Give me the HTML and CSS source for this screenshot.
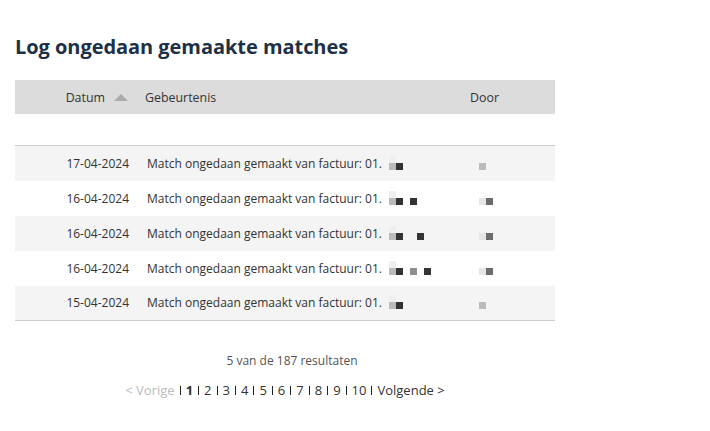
FILE: index.html
```html
<!DOCTYPE html>
<html lang="nl">
<head>
<meta charset="utf-8">
<title>Log ongedaan gemaakte matches</title>
<link rel="stylesheet" href="styles.css">
</head>
<body>
<main class="page">
  <h1 class="title">Log ongedaan gemaakte matches</h1>
  <table class="log">
    <thead>
      <tr class="head-row">
        <th class="c-date">Datum<span class="sort-up"></span></th>
        <th class="c-event">Gebeurtenis</th>
        <th class="c-door">Door</th>
      </tr>
    </thead>
    <tbody>
      <tr class="spacer"><td colspan="3"></td></tr>
      <tr class="row odd">
        <td class="c-date">17-04-2024</td>
        <td class="c-event">Match ongedaan gemaakt van factuur: 01.<span class="px"><i class="l top"></i><i class="d"></i></span></td>
        <td class="c-door"><span class="px door"><i class="l"></i></span></td>
      </tr>
      <tr class="row">
        <td class="c-date">16-04-2024</td>
        <td class="c-event">Match ongedaan gemaakt van factuur: 01.<span class="px"><i class="l top"></i><i class="d"></i><i></i><i class="d"></i></span></td>
        <td class="c-door"><span class="px door"><i class="vl"></i><i class="m"></i></span></td>
      </tr>
      <tr class="row odd">
        <td class="c-date">16-04-2024</td>
        <td class="c-event">Match ongedaan gemaakt van factuur: 01.<span class="px"><i class="l top"></i><i class="d"></i><i></i><i></i><i class="d"></i></span></td>
        <td class="c-door"><span class="px door"><i class="vl"></i><i class="m"></i></span></td>
      </tr>
      <tr class="row">
        <td class="c-date">16-04-2024</td>
        <td class="c-event">Match ongedaan gemaakt van factuur: 01.<span class="px"><i class="l top"></i><i class="d"></i><i></i><i class="g"></i><i></i><i class="d"></i></span></td>
        <td class="c-door"><span class="px door"><i class="vl"></i><i class="m"></i></span></td>
      </tr>
      <tr class="row odd last">
        <td class="c-date">15-04-2024</td>
        <td class="c-event">Match ongedaan gemaakt van factuur: 01.<span class="px"><i class="l top"></i><i class="d"></i></span></td>
        <td class="c-door"><span class="px door"><i class="l"></i></span></td>
      </tr>
    </tbody>
  </table>
  <div class="footer">
    <p class="count">5 van de 187 resultaten</p>
    <nav class="pager">
      <span class="muted">&lt; Vorige</span><span class="sep"></span><b>1</b><span class="sep"></span>2<span class="sep"></span>3<span class="sep"></span>4<span class="sep"></span>5<span class="sep"></span>6<span class="sep"></span>7<span class="sep"></span>8<span class="sep"></span>9<span class="sep"></span>10<span class="sep"></span>Volgende &gt;
    </nav>
  </div>
</main>
</body>
</html>
```

FILE: styles.css
```css
html, body {
  margin: 0;
  padding: 0;
  background: #fff;
}
body {
  font-family: "Open Sans", "Noto Sans", sans-serif;
  color: #333;
}
.page {
  padding: 0 15px;
}
.title {
  margin: 0;
  padding-top: 33px;
  font-size: 20px;
  line-height: 27px;
  font-weight: 700;
  color: #1d3048;
  letter-spacing: -0.05px;
}
.log {
  margin-top: 20px;
  width: 540px;
  border-collapse: collapse;
  font-size: 12px;
}
.log th, .log td {
  padding: 0;
  white-space: nowrap;
}
.head-row {
  background: #dcdcdc;
  height: 34px;
}
.head-row th {
  font-weight: 400;
  font-size: 12.4px;
  color: #333;
  text-align: left;
}
.c-date {
  width: 114px;
  text-align: right !important;
  padding-right: 6px !important;
}
.c-event {
  padding-left: 10px !important;
}
.row .c-event {
  padding-left: 12px !important;
}
.c-door {
  width: 85px;
  padding-left: 0 !important;
}
.sort-up {
  display: inline-block;
  width: 0;
  height: 0;
  margin-left: 9px;
  margin-right: 1px;
  border-left: 7.5px solid transparent;
  border-right: 7.5px solid transparent;
  border-bottom: 7px solid #aaa;
  vertical-align: 1px;
}
.spacer td {
  height: 31px;
}
.row {
  height: 35px;
}
.row td {
  color: #333;
}
.row.odd {
  background: #f4f4f4;
}
.spacer + .row td {
  border-top: 1px solid #cfcfcf;
}
.row.last td {
  border-bottom: 1px solid #cfcfcf;
}
.px {
  display: inline-flex;
  margin-left: 7px;
  vertical-align: -2px;
}
.px i {
  display: block;
  width: 7px;
  height: 7px;
}
.px i.top { box-shadow: 0 -7px 0 #efefef; }
.px i.l { background: #bbb; }
.px i.vl { background: #e6e6e6; }
.px i.d { background: #333; }
.px i.m { background: #6b6b6b; }
.px i.g { background: #8e8e8e; }
.px.door {
  margin-left: 9px;
}
.footer {
  width: 540px;
  text-align: center;
}
.count {
  margin: 31px 0 0;
  font-size: 12px;
  line-height: 17px;
  color: #555;
  padding-left: 14px;
}
.pager {
  margin-top: 12px;
  font-size: 13px;
  line-height: 18px;
  color: #333;
}
.pager b {
  font-weight: 700;
}
.sep {
  display: inline-block;
  width: 1px;
  height: 9px;
  margin: 0 5px;
  background: #222;
  vertical-align: 0;
}
.muted {
  color: #bbb;
}
```
